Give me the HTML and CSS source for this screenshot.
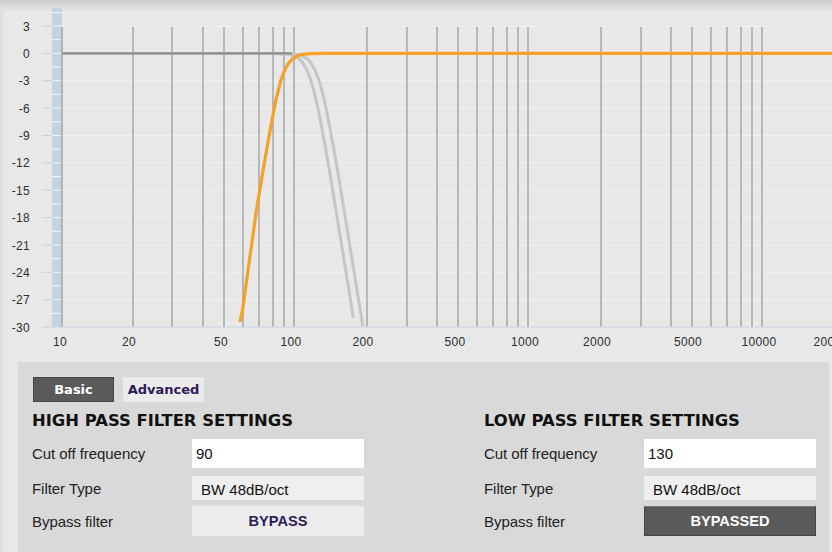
FILE: index.html
```html
<!DOCTYPE html>
<html>
    <head>
        <meta charset="utf-8">
        <link rel="stylesheet" href="styles.css">
    </head>
    <body>

        <div class="graph">
            <svg class="response" width="832" height="362" viewBox="0 0 832 362">
                <!-- level strip on the left -->
                <rect class="strip" x="52" y="8" width="10" height="319"/>
                <path class="strip-ticks" d="M52 12.7H62M52 26H62M52 39.7H62M52 53.4H62M52 67H62M52 80.7H62M52 94.4H62M52 108.1H62M52 121.8H62M52 135.5H62M52 149.2H62M52 162.9H62M52 176.6H62M52 190.2H62M52 203.9H62M52 217.6H62M52 231.3H62M52 245H62M52 258.7H62M52 272.3H62M52 286H62M52 299.7H62M52 313.4H62"/>
                <path class="axis-ticks" d="M42 26H52M42 53.4H52M42 80.7H52M42 108.1H52M42 135.5H52M42 162.9H52M42 190.2H52M42 217.6H52M42 245H52M42 272.3H52M42 299.7H52"/>

                <!-- grid -->
                <path class="hgrid" d="M62 26H832M62 80.7H832M62 108.1H832M62 135.5H832M62 162.9H832M62 190.2H832M62 217.6H832M62 245H832M62 272.3H832M62 299.7H832"/>
                <path class="vgrid" d="M62 27V327M133 27V327M172 27V327M203 27V327M224 27V327M243 27V327M259 27V327M273 27V327M284 27V327M294 27V327M367 27V327M407 27V327M437 27V327M458 27V327M477 27V327M493 27V327M507 27V327M518 27V327M528 27V327M601 27V327M641 27V327M671 27V327M692 27V327M711 27V327M727 27V327M741 27V327M752 27V327M762 27V327"/>
                <path class="baseline" d="M42 327.1H832"/>

                <g class="ylabels">
                    <text x="30" y="30.5">3</text>
                    <text x="30" y="57.9">0</text>
                    <text x="30" y="85.2">-3</text>
                    <text x="30" y="112.6">-6</text>
                    <text x="30" y="140">-9</text>
                    <text x="30" y="167.4">-12</text>
                    <text x="30" y="194.7">-15</text>
                    <text x="30" y="222.1">-18</text>
                    <text x="30" y="249.5">-21</text>
                    <text x="30" y="276.8">-24</text>
                    <text x="30" y="304.2">-27</text>
                    <text x="30" y="331.6">-30</text>
                </g>
                <g class="xlabels">
                    <text x="60" y="346">10</text>
                    <text x="129" y="346">20</text>
                    <text x="221" y="346">50</text>
                    <text x="291" y="346">100</text>
                    <text x="363" y="346">200</text>
                    <text x="455" y="346">500</text>
                    <text x="525" y="346">1000</text>
                    <text x="597" y="346">2000</text>
                    <text x="688" y="346">5000</text>
                    <text x="759" y="346">10000</text>
                    <text x="831" y="346">20000</text>
                </g>

                <!-- low pass curves (bypassed) -->
                <polyline class="curve-off" points="62,53.4 273.7,53.5 284.4,53.9 289.3,54.5 294.1,55.9 298.6,58.4 302.9,62.9 307,70.2 311,80.6 314.8,94.4 318.5,110.7 325.5,147.7 332.1,186.3 338.2,223.9 344,259.8 349.5,293.9 353.3,318"/>
                <polyline class="curve-off" points="62,53.4 281.8,53.5 292.5,53.9 297.4,54.5 302.2,55.9 306.7,58.4 311,62.9 315.1,70.2 319.1,80.6 322.9,94.4 326.6,110.7 333.6,147.7 340.2,186.3 346.3,223.9 352.1,259.8 357.6,293.9 362.8,326"/>
                <path class="zero" d="M62 53.4H292"/>

                <!-- high pass curve -->
                <polyline class="curve-on" points="240,322 242.5,310.4 249.5,259.7 256,213.1 263,170.8 269.5,133.4 275.3,102.7 280.8,80.5 283.6,72.7 286.3,67 289,62.7 291.5,59.7 296.4,56.2 301.2,54.6 310,53.6 325,53.4 832,53.4"/>
            </svg>
        </div>

        <div class="panel">
            <div class="tabs">
                <button class="tab active">Basic</button>
                <button class="tab">Advanced</button>
            </div>
            <div class="filters">
                <div class="filter">
                    <h2>HIGH PASS FILTER SETTINGS</h2>
                    <div class="row">
                        <label>Cut off frequency</label>
                        <input class="freq" value="90"/>
                    </div>
                    <div class="row">
                        <label>Filter Type</label>
                        <div class="type">BW 48dB/oct</div>
                    </div>
                    <div class="row">
                        <label>Bypass filter</label>
                        <button class="bypass">BYPASS</button>
                    </div>
                </div>
                <div class="filter">
                    <h2>LOW PASS FILTER SETTINGS</h2>
                    <div class="row">
                        <label>Cut off frequency</label>
                        <input class="freq" value="130"/>
                    </div>
                    <div class="row">
                        <label>Filter Type</label>
                        <div class="type">BW 48dB/oct</div>
                    </div>
                    <div class="row">
                        <label>Bypass filter</label>
                        <button class="bypass on">BYPASSED</button>
                    </div>
                </div>
            </div>
        </div>

    </body>
</html>
```

FILE: styles.css
```css
* { margin: 0; padding: 0; box-sizing: border-box; }
html, body { width: 100%; height: 100%; overflow: hidden; }
body { background: linear-gradient(to right, #dcdcdc, #e8e8e8 5px); font-family: "Liberation Sans", Arial, sans-serif; font-size: 15px; color: #222222; }

.graph { height: 362px; background: linear-gradient(#cecece, #e0e0e0 9px, rgba(232, 232, 232, 0) 12px); }
.graph svg { display: block; }
.graph .strip { fill: #c3d3e2; }
.graph .strip-ticks { stroke: #f4f7fa; stroke-width: 1; fill: none; }
.graph .axis-ticks { stroke: #c3d3e2; stroke-width: 1; fill: none; }
.graph .hgrid { stroke: #f1f1f1; stroke-width: 1; fill: none; }
.graph .vgrid { stroke: #a6a6a6; stroke-width: 1.5; fill: none; }
.graph .baseline { stroke: #c3d3e2; stroke-width: 1; fill: none; }
.graph text { font-family: "Liberation Sans", Arial, sans-serif; font-size: 12px; letter-spacing: 0.3px; fill: #2e2e2e; }
.graph .ylabels text { text-anchor: end; }
.graph .xlabels text { text-anchor: middle; }
.graph .curve-off { fill: none; stroke: #c6c6c6; stroke-width: 3; stroke-linejoin: round; }
.graph .zero { stroke: #8d8f8f; stroke-width: 2.4; fill: none; }
.graph .curve-on { fill: none; stroke: #f6a024; stroke-width: 3.2; stroke-linejoin: round; }

.panel { margin-left: 18px; width: 811px; height: 200px; background: #d9d9d9; padding: 15px 0 0 14px; }

.tabs { display: flex; gap: 9px; height: 25px; padding-left: 1px; }
.tab { width: 81px; height: 25px; border: none; background: #ebebeb; color: #2d1b57; font: bold 13px "DejaVu Sans", Verdana, sans-serif; }
.tab.active { background: #5a5a5a; color: #ffffff; border: 1px solid #444444; }

.filters { display: grid; grid-template-columns: 332px 333px; column-gap: 120px; margin-top: 9px; }
.filter h2 { font: bold 16.4px/20px "DejaVu Sans", Verdana, sans-serif; color: #111111; margin-bottom: 8px; }
.filter .row { display: flex; align-items: center; }
.filter .row + .row { margin-top: 8px; }
.filter .row:last-child { margin-top: 6px; }
.filter label { width: 160px; letter-spacing: -0.05px; }
.filter .freq { width: 172px; height: 29px; border: none; outline: none; background: #ffffff; padding-left: 4px; font: 15px "Liberation Sans", Arial, sans-serif; color: #111111; }
.filter .type { width: 172px; height: 24px; background: #efefef; padding: 4px 0 0 9px; line-height: 20px; color: #111111; }
.filter .bypass { width: 172px; height: 30px; border: none; background: #ececec; color: #2d1b57; font: bold 14.6px "Liberation Sans", Arial, sans-serif; }
.filter .bypass.on { background: #5a5a5a; color: #ffffff; border: 1px solid #474747; border-top-color: #7a7a7a; }
```
